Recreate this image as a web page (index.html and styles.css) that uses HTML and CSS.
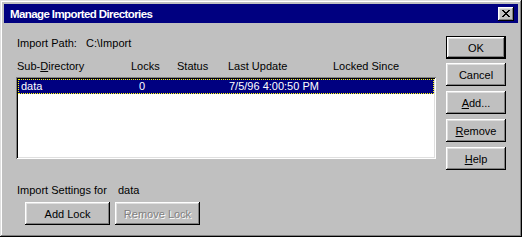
FILE: index.html
```
<!DOCTYPE html>
<html lang="en">
<head>
  <meta charset="UTF-8">
  <title>Manage Imported Directories</title>
  <link rel="stylesheet" href="styles.css">
</head>
<body>
  <div class="window">
    <div class="titlebar">
      <span class="title">Manage Imported Directories</span>
      <button class="close" title="Close">
        <svg width="8" height="7" viewBox="0 0 8 7">
          <path d="M0 0h2v1h1v1h2V1h1V0h2v1H7v1H6v1H5v1h1v1h1v1h1v1H6V6H5V5H3v1H2v1H0V6h1V5h1V4h1V3H2V2H1V1H0z" fill="#000"/>
        </svg>
      </button>
    </div>

    <div class="content">
      <div class="main">
        <div class="path-row">
          <span>Import Path:</span>
          <span class="path">C:\Import</span>
        </div>

        <div class="headers">
          <span class="col-dir">Sub-<u>D</u>irectory</span>
          <span class="col-locks">Locks</span>
          <span class="col-status">Status</span>
          <span class="col-update">Last Update</span>
          <span class="col-since">Locked Since</span>
        </div>

        <div class="listbox">
          <div class="item selected">
            <span class="col-dir">data</span>
            <span class="col-locks">0</span>
            <span class="col-status"></span>
            <span class="col-update">7/5/96 4:00:50 PM</span>
            <span class="col-since"></span>
          </div>
        </div>

        <div class="settings-row">
          <span>Import Settings for</span>
          <span class="settings-name">data</span>
        </div>

        <div class="lock-buttons">
          <button class="btn lock">Add Lock</button>
          <button class="btn lock" disabled>Remove Lock</button>
        </div>
      </div>

      <div class="side">
        <button class="btn side-btn default">OK</button>
        <button class="btn side-btn">Cancel</button>
        <button class="btn side-btn"><u>A</u>dd...</button>
        <button class="btn side-btn"><u>R</u>emove</button>
        <button class="btn side-btn"><u>H</u>elp</button>
      </div>
    </div>
  </div>
</body>
</html>
```

FILE: styles.css
```
body {
  margin: 0;
  background: #fff;
  font-family: "Liberation Sans", Arial, sans-serif;
  font-size: 11px;
  color: #000;
}
.window {
  width: 522px;
  height: 237px;
  box-sizing: border-box;
  padding: 4px;
  background: #c0c0c0;
  box-shadow: inset -1px -1px #000, inset 1px 1px #dfdfdf,
              inset -2px -2px #808080, inset 2px 2px #fff;
  display: flex;
  flex-direction: column;
}
.titlebar {
  height: 19px;
  background: #000080;
  display: flex;
  align-items: center;
  justify-content: space-between;
  padding: 0 4px 0 6px;
}
.title {
  color: #fff;
  font-weight: bold;
  font-size: 11.5px;
  letter-spacing: -0.6px;
}
.close {
  width: 16px;
  height: 14px;
  padding: 0;
  border: none;
  background: #c0c0c0;
  box-shadow: inset -1px -1px #000, inset 1px 1px #fff,
              inset -2px -2px #808080, inset 2px 2px #dfdfdf;
  display: flex;
  align-items: center;
  justify-content: center;
}
.close svg { display: block; margin: 0 1px 1px 0; }
.content {
  display: flex;
  flex: 1;
}
.main {
  width: 420px;
  margin-left: 12px;
  display: flex;
  flex-direction: column;
}
.path-row {
  margin-top: 14px;
  line-height: 13px;
  padding-left: 1px;
}
.path { margin-left: 6px; }
.headers {
  margin-top: 10px;
  line-height: 13px;
  display: flex;
  padding-left: 1px;
}
.col-dir { width: 114px; }
.col-locks { width: 46px; }
.col-status { width: 51px; }
.col-update { width: 105px; }
.col-since { flex: 1; }
.listbox {
  margin-top: 4px;
  height: 82px;
  box-sizing: border-box;
  padding: 2px;
  background: #fff;
  box-shadow: inset 1px 1px #808080, inset -1px -1px #fff,
              inset 2px 2px #000, inset -2px -2px #dfdfdf;
}
.item {
  display: flex;
  height: 15px;
  line-height: 13px;
  box-sizing: border-box;
}
.item.selected {
  background: #000080;
  color: #fff;
  border: 1px dotted #ffff00;
  padding-left: 2px;
}
.item .col-dir { width: 113px; }
.item .col-locks { width: 46px; padding-left: 5px; box-sizing: border-box; }
.item .col-status { width: 49px; }
.settings-row {
  margin-top: 25px;
  line-height: 13px;
  padding-left: 1px;
}
.settings-name { margin-left: 8px; }
.lock-buttons {
  margin-top: 5px;
  margin-left: 9px;
  display: flex;
  gap: 5px;
}
.btn {
  height: 23px;
  padding: 0;
  border: none;
  background: #c0c0c0;
  font-family: "Liberation Sans", Arial, sans-serif;
  font-size: 11px;
  color: #000;
  box-shadow: inset -1px -1px #000, inset 1px 1px #fff,
              inset -2px -2px #808080, inset 2px 2px #dfdfdf;
}
.btn:disabled {
  color: #808080;
  text-shadow: 1px 1px #fff;
}
.lock { width: 85px; }
.side {
  margin-left: 10px;
  margin-top: 13px;
  display: flex;
  flex-direction: column;
}
.side-btn {
  width: 60px;
  margin-bottom: 5px;
}
.side-btn.default {
  margin-bottom: 4px;
  box-shadow: inset 0 0 0 1px #000, inset -2px -2px #000, inset 2px 2px #fff,
              inset -3px -3px #808080, inset 3px 3px #dfdfdf;
}
```
